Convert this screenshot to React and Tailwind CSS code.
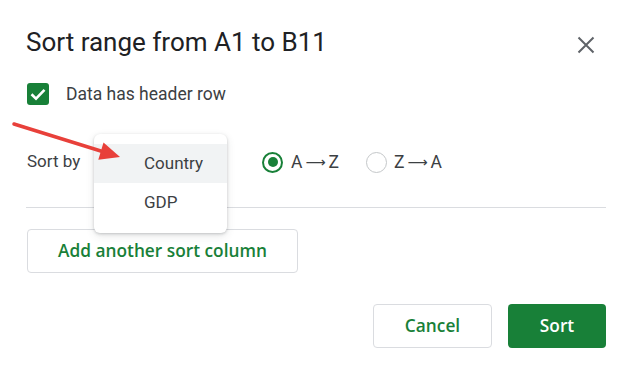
import React from "react";

function Radio({ checked }) {
  return checked ? (
    <span className="flex h-[21px] w-[21px] shrink-0 items-center justify-center rounded-full border-[2.5px] border-[#188038]">
      <span className="h-[10px] w-[10px] rounded-full bg-[#188038]" />
    </span>
  ) : (
    <span className="block h-[21px] w-[21px] shrink-0 rounded-full border-[1.5px] border-[#c4c7c9]" />
  );
}

function Arrow() {
  return (
    <span
      className="mx-[3px] inline-block align-[1px] text-[14px] leading-none"
      style={{ fontFamily: "'DejaVu Sans', sans-serif" }}
    >
      ⟶
    </span>
  );
}

const gsans = { fontFamily: "'Open Sans', Roboto, sans-serif" };

export default function App() {
  return (
    <div
      className="relative h-[377px] w-[622px] overflow-hidden bg-white pl-[26px] pr-[16px]"
      style={{ fontFamily: "Roboto, 'Noto Sans', sans-serif" }}
    >
      {/* Title row */}
      <div className="mt-[26px] flex h-[32px] items-center justify-between">
        <h1 className="text-[26px] leading-[32px] font-normal text-[#202124]">
          Sort range from A1 to B11
        </h1>
        <svg width="24" height="24" viewBox="0 0 24 24" className="mr-[8px] mt-[6px]">
          <path d="M4.5 4.5L19.5 19.5M19.5 4.5L4.5 19.5" stroke="#5f6368" strokeWidth="2" />
        </svg>
      </div>

      {/* Checkbox row */}
      <div className="mt-[25px] flex h-[22px] items-center">
        <span className="ml-[1px] flex h-[22px] w-[22px] items-center justify-center rounded-[3px] bg-[#188038]">
          <svg width="22" height="22" viewBox="0 0 22 22">
            <path d="M4.5 11.3L9 15.6L17.5 6.8" fill="none" stroke="white" strokeWidth="2.6" />
          </svg>
        </span>
        <span className="ml-[17px] text-[17.5px] text-[#3c4043]">Data has header row</span>
      </div>

      {/* Sort by row */}
      <div className="relative mt-[37px] flex h-[40px] items-center">
        <div className="w-[236px] pl-[1px] text-[17px] text-[#3c4043]">Sort by</div>
        <div className="flex items-center text-[17.5px] text-[#3c4043]">
          <Radio checked />
          <span className="ml-[8px]">
            A<Arrow />Z
          </span>
          <span className="ml-[27px]">
            <Radio />
          </span>
          <span className="ml-[7px]">
            Z<Arrow />A
          </span>
        </div>

        {/* Dropdown menu */}
        <div className="absolute left-[68px] top-[-8px] z-10 w-[133px] rounded-[6px] bg-white pb-[11px] pt-[10px] shadow-[0_1px_3px_rgba(60,64,67,0.25),0_3px_8px_rgba(60,64,67,0.12)]">
          <div className="flex h-[39px] items-center bg-[#f1f3f4] pl-[50px] text-[17px] text-[#3c4043]">
            Country
          </div>
          <div className="flex h-[39px] items-center pl-[50px] text-[17px] text-[#3c4043]">
            GDP
          </div>
        </div>
      </div>

      {/* Divider */}
      <div className="mt-[25px] h-px bg-[#dadce0]" />

      {/* Add another sort column */}
      <button
        className="ml-[1px] mt-[21px] flex h-[44px] w-[271px] items-center justify-center rounded-[4px] border border-[#dadce0] bg-white text-[17.3px] font-semibold text-[#188038]"
        style={gsans}
      >
        Add another sort column
      </button>

      {/* Footer */}
      <div className="mt-[31px] flex justify-end gap-[16px]">
        <button
          className="flex h-[44px] w-[119px] items-center justify-center rounded-[4px] border border-[#dadce0] bg-white text-[17.3px] font-semibold text-[#188038]"
          style={gsans}
        >
          Cancel
        </button>
        <button
          className="flex h-[44px] w-[98px] items-center justify-center rounded-[4px] bg-[#188038] text-[17.3px] font-semibold text-white"
          style={gsans}
        >
          Sort
        </button>
      </div>

      {/* Red annotation arrow */}
      <svg className="pointer-events-none absolute left-0 top-0 z-20" width="622" height="377">
        <line x1="14" y1="124" x2="104" y2="152" stroke="#e8403a" strokeWidth="3.5" strokeLinecap="round" />
        <polygon points="120,157 98.3,159.7 103.5,142.5" fill="#e8403a" />
      </svg>
    </div>
  );
}
